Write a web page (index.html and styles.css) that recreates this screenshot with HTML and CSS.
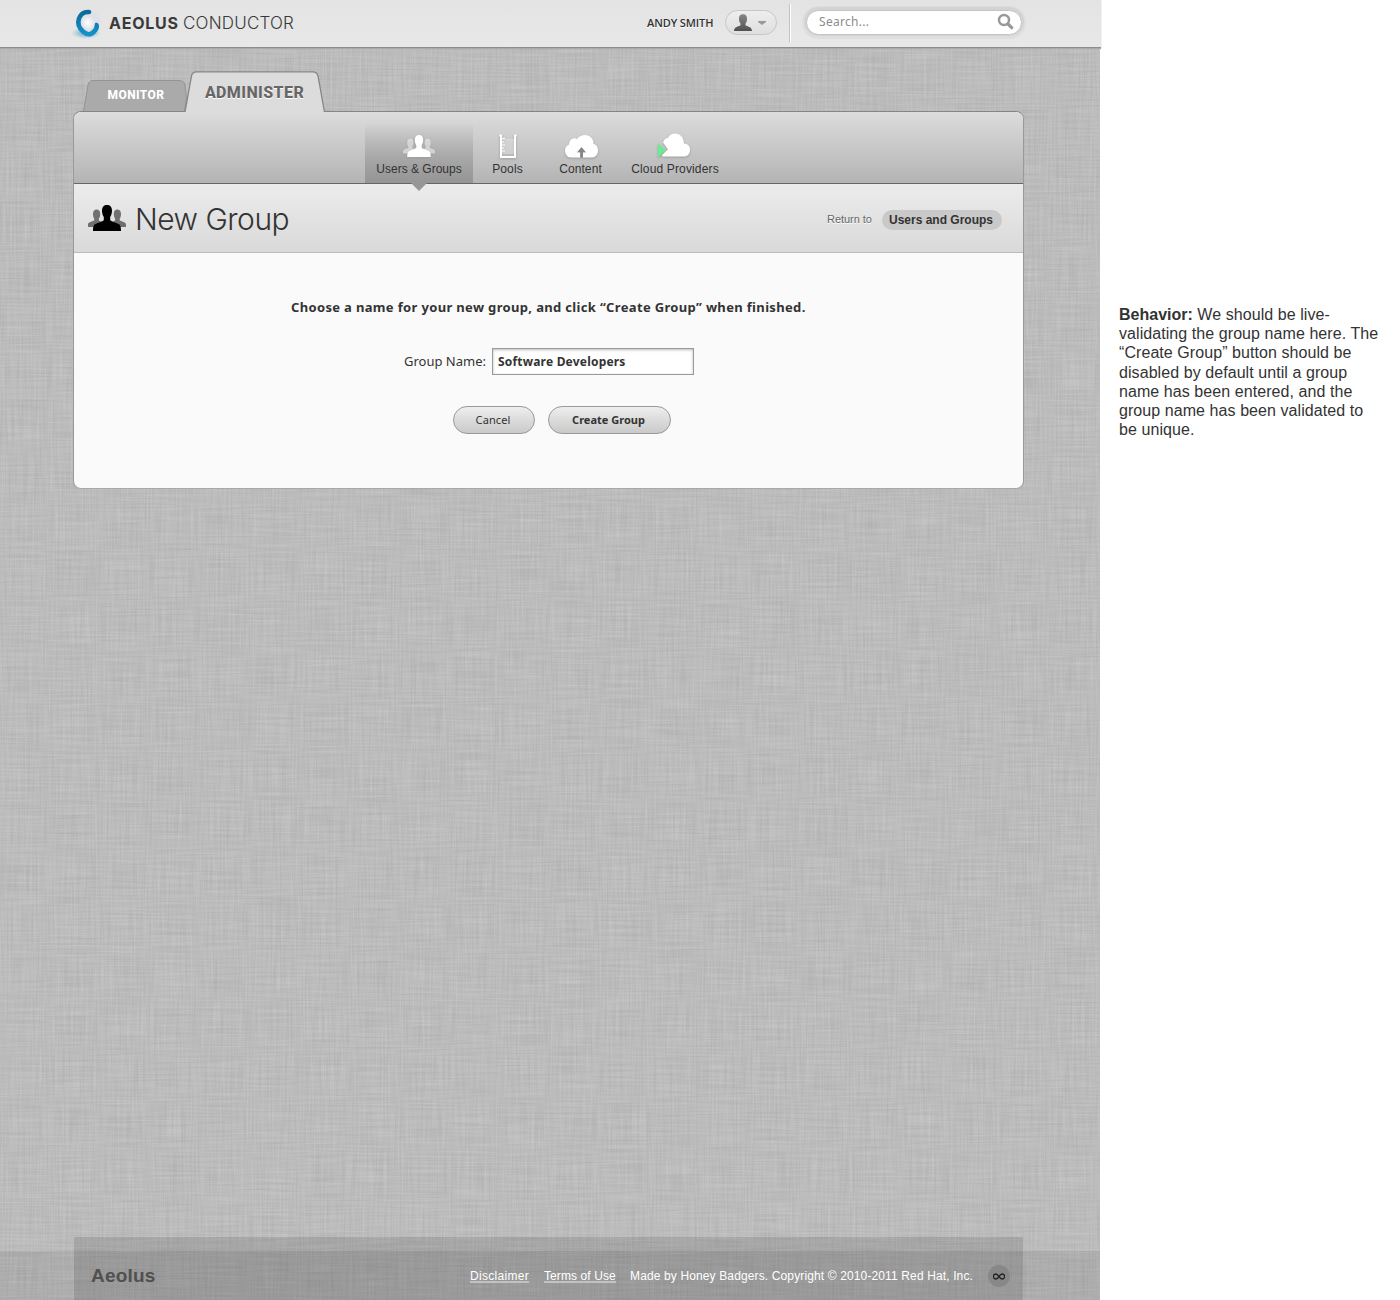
FILE: index.html
```html
<!DOCTYPE html>
<html lang="en">
<head>
<meta charset="utf-8">
<title>Aeolus Conductor – New Group</title>
<link rel="stylesheet" href="styles.css">
</head>
<body>
<svg class="defs" width="0" height="0" aria-hidden="true">
  <defs>
    <linearGradient id="ring" x1="0" y1="0" x2="0" y2="1"><stop offset="0" stop-color="#0b6b98"/><stop offset="1" stop-color="#1591c8"/></linearGradient>
    <radialGradient id="ball"><stop offset="0" stop-color="#fff"/><stop offset="1" stop-color="#e0e0ea"/></radialGradient>
    <radialGradient id="glow"><stop offset="0" stop-color="#5f9dbb"/><stop offset="1" stop-color="#6ab2d4" stop-opacity="0"/></radialGradient>
    <linearGradient id="person" x1="0" y1="0" x2="0" y2="1"><stop offset="0" stop-color="#888"/><stop offset="1" stop-color="#505050"/></linearGradient>
    <symbol id="users" viewBox="0 0 38 26">
      <g class="side"><path d="M5 9c0-3 1.300-4.500 3.700-4.500s3.500 1.500 3.500 4.500c0 2-.6 3.500-1.300 4.500v2l5 2.500v4H0v-2.500c0-2 2.500-2.500 6.200-4v-2C5.500 12.500 5 11 5 9z"/><path d="M33 9c0-3-1.300-4.500-3.700-4.500S25.800 6 25.800 9c0 2 .6 3.500 1.300 4.500v2l-5 2.500v4H38v-2.500c0-2-2.500-2.500-6.200-4v-2C32.500 12.500 33 11 33 9z"/></g>
      <path d="M14 5.500C14 2 15.800 0 19 0s5 2 5 5.500c0 3-.8 5-1.800 6.500v3.200c2 1.500 5.500 2.500 8.300 3.800 1.700.8 2.500 2.500 2.500 7H5c0-4.500.8-6.200 2.500-7 2.800-1.300 6.300-2.300 8.300-3.800V12c-1-1.500-1.800-3.500-1.800-6.500z"/>
    </symbol>
    <filter id="linen" x="0" y="0" width="100%" height="100%" color-interpolation-filters="sRGB">
      <feTurbulence type="fractalNoise" baseFrequency="0.55 0.02" numOctaves="2" seed="4"/>
      <feColorMatrix values=".15 0 0 0 .66 .15 0 0 0 .66 .15 0 0 0 .66 0 0 0 0 1" result="warp"/>
      <feTurbulence type="fractalNoise" baseFrequency="0.02 0.55" numOctaves="2" seed="9"/>
      <feColorMatrix values=".15 0 0 0 .66 .15 0 0 0 .66 .15 0 0 0 .66 0 0 0 0 1"/>
      <feComposite in2="warp" operator="arithmetic" k2=".5" k3=".5"/>
    </filter>
  </defs>
</svg>
<div class="layout">
  <div class="screen">
    <svg class="fabric" width="1100" height="1300" aria-hidden="true"><rect width="1100" height="1300" filter="url(#linen)"/></svg>
    <header class="topbar">
      <a class="logo">
        <svg width="32" height="36" viewBox="0 0 32 36"><ellipse cx="15" cy="29" rx="15" ry="6" fill="url(#glow)"/><circle cx="17.500" cy="18.300" r="11.800" fill="#e0e0ea"/><path d="M18 8Q10.500 7.500 8 14.500T12 27.500T24 26.500Q26.500 24 25.500 21" fill="none" stroke="url(#ring)" stroke-width="4.600" stroke-linecap="round"/><circle cx="17" cy="18.800" r="7" fill="url(#ball)"/></svg>
        <span class="brand"><b>AEOLUS</b><span class="thin">CONDUCTOR</span></span>
      </a>
      <span class="username">ANDY SMITH</span>
      <button class="account"><svg width="18" height="17" viewBox="0 0 18 17"><path d="M5 5C5 1.500 6.500.3 9 .3s4 1.200 4 4.700c0 2-.7 3.700-1.500 4.600v1.700c1.500 1.200 6.500 1.500 6.500 5.700H0c0-4.200 5-4.500 6.500-5.700V9.600C5.700 8.700 5 7 5 5z" fill="url(#person)"/></svg><svg width="8" height="4" viewBox="0 0 8 4"><path d="M0 0h8v1L4 4 0 1z" fill="#999"/></svg></button>
      <i class="rule"></i>
      <div class="search"><span>Search...</span><svg width="18" height="18" viewBox="0 0 18 18" fill="none" stroke="#999"><circle cx="7" cy="7" r="5" stroke-width="2.500"/><path d="M10.800 10.800L14.700 14.700" stroke-width="3.300" stroke-linecap="round"/></svg></div>
    </header>
    <nav class="tabs">
      <a class="tab"><svg width="104" height="31" viewBox="0 0 104 31"><path d="M.5 31L5 5Q6 .5 10 .5H96Q101 .5 102 5L103.500 18 101.500 31" fill="#aaa" stroke="#949494"/></svg><span>MONITOR</span></a>
      <a class="tab active"><svg width="142" height="42" viewBox="0 0 142 42"><path d="M1 41L7.500 5Q8.300 .8 12.500 .8H129Q133 .8 134 5L140.500 41V42H1z" fill="#dcdcdc"/><path d="M1 41L7.500 5Q8.300 .8 12.500 .8H129Q133 .8 134 5L140.500 41" fill="none" stroke="#858585" stroke-width="1.300"/></svg><span>ADMINISTER</span></a>
    </nav>
    <main class="panel">
      <nav class="sections">
        <a class="current"><svg class="white" width="32" height="22"><use href="#users"/></svg><span>Users &amp; Groups</span></a>
        <a class="pools"><svg width="20" height="26" viewBox="0 0 20 26"><path d="M4 6h12v15H4z" fill="#fff" opacity=".35"/><path d="M1.300 2.500H3V24h14V2.500h1.700" fill="none" stroke="#fff" stroke-width="2"/><path d="M3 5.500h4M3 9h3M3 12h4M3 15h3M3 18h4" stroke="#fff"/></svg><span>Pools</span></a>
        <a class="content"><svg width="36" height="26" viewBox="0 0 36 26"><path d="M7 24.500C3 24.500 1 21 1 17.500c0-3.500 2-5.500 4-6 0-5 4.500-7.500 8-5.500C15 3 18 2 21 2c5 0 9 4 8.500 9 3 .5 4.500 3.500 4.500 6.500 0 4-2.500 7-6 7H19v-5h3L17.500 14 13 19.500h3v5z" fill="#fff"/><path d="M17.500 14.500l4 4.500H19v5.500h-2.500V19H13.500z" fill="#858585"/></svg><span>Content</span></a>
        <a class="providers"><svg width="34" height="28" viewBox="0 0 34 28"><path d="M1 11.500l7.500 7L1 25.500z" fill="#64f08c"/><path d="M6 10.500c1-2.500 2.500-4.500 5-4.500 1-3 4-4.500 7-4.500 5 0 9 4 9 10 4 0 6 3 6 6.500 0 4-2.500 6.500-6 6.500H8c-2 0-3.500-.5-3-1.500L11 17.500z" fill="#fff"/></svg><span>Cloud Providers</span></a>
      </nav>
      <section class="heading">
        <svg width="38" height="26"><use href="#users"/></svg>
        <h1>New Group</h1>
        <span class="return">Return to</span><a class="back">Users and Groups</a>
      </section>
      <form class="form">
        <p>Choose a name for your new group, and click “Create Group” when finished.</p>
        <div class="field"><label>Group Name:</label><div class="input">Software Developers</div></div>
        <div class="actions"><button type="button" class="cancel">Cancel</button><button type="button" class="create">Create Group</button></div>
      </form>
    </main>
    <footer class="footer">
      <div class="foot">
        <b>Aeolus</b><a class="disclaimer">Disclaimer</a><a class="terms">Terms of Use</a><span class="made">Made by Honey Badgers. Copyright © 2010-2011 Red Hat, Inc.</span>
        <i class="infinity"><svg width="12" height="7" viewBox="0 0 12 7"><path d="M6 3.500C4.500 1.400 3.800 1 2.900 1a2.500 2.500 0 0 0 0 5C3.800 6 4.500 5.600 6 3.500S8.200 1 9.100 1a2.500 2.500 0 0 1 0 5C8.200 6 7.500 5.600 6 3.500z" fill="none" stroke="#222" stroke-width="1.300"/></svg></i>
      </div>
    </footer>
  </div>
  <aside class="note"><b>Behavior:</b> We should be live-<br>validating the group name here. The<br>“Create Group” button should be<br>disabled by default until a group<br>name has been entered, and the<br>group name has been validated to<br>be unique.</aside>
</div>
</body>
</html>
```
FILE: styles.css
```css
* { box-sizing: border-box; }
body { margin: 0; background: #fff; color: #333; font: 12px/16px "Liberation Sans", Arial, sans-serif; }
svg { display: block; flex: none; }
button { font: inherit; color: inherit; margin: 0; padding: 0; }
span, b, a, p, label, h1 { white-space: nowrap; }
.defs { position: absolute; }
.layout { display: flex; width: 1400px; height: 1300px; overflow: hidden; }
.screen { position: relative; display: flex; flex-direction: column; width: 1100px; height: 1300px; flex: none; background: #bbb; isolation: isolate; }
.fabric { position: absolute; inset: 0; z-index: -1; }

.topbar { display: flex; align-items: flex-start; width: 1101px; height: 48px; flex: none; background: linear-gradient(#e3e3e3, #e8e8e8); border-bottom: 1px solid #8d8d8d; box-shadow: 0 1px 1px #aaa; padding-left: 71px; }
.logo { display: flex; width: 576px; padding-top: 4px; }
.brand { display: flex; padding: 9px 0 0 6px; font: 17px/20px "Inter", sans-serif; color: #3a3a3a; }
.brand b { width: 74px; font-weight: 700; font-size: 16px; letter-spacing: .75px; }
.brand .thin { font-weight: 300; letter-spacing: .2px; }
.username { width: 78px; padding-top: 15px; font: 600 11px/16px "Open Sans", sans-serif; letter-spacing: -.1px; text-shadow: 0 1px #fff; }
.account { display: flex; align-items: center; gap: 6px; width: 52px; height: 25px; margin-top: 10px; padding-left: 8px; border: 1px solid #c6c6c6; border-radius: 13px; background: linear-gradient(#eee, #dfdfdf); }
.rule { width: 2px; height: 38px; margin: 4px 0 0 12px; background: #c2c2c2; border-right: 1px solid #fff; }
.search { display: flex; justify-content: space-between; align-items: flex-start; width: 216px; height: 25px; margin: 10px 0 0 15px; padding: 2px 6px 0 12px; border: 1px solid #c4c4c4; border-radius: 13px; background: #fff; box-shadow: 0 -1px 0 2px #d3d3d3, 0 0 0 4px #dedede; color: #8c8c8c; font: 12px/18px "Noto Sans", sans-serif; letter-spacing: .3px; }

.tabs { display: flex; align-items: flex-end; height: 64px; padding-left: 83px; margin-bottom: -1px; flex: none; z-index: 1; }
.tab { display: flex; justify-content: center; position: relative; width: 104px; height: 31px; margin-bottom: 1px; color: #fff; font: 800 12px/30px "Roboto", sans-serif; letter-spacing: .4px; }
.tab svg { position: absolute; left: 0; top: 0; z-index: -1; }
.tab span { padding-left: 2px; }
.tab.active { width: 142px; height: 42px; margin: 0 0 -1px -3px; color: #666; font-size: 16px; line-height: 43px; text-shadow: 0 1px #fff; }
.tab.active span { padding: 0 1px 0 0; }

.panel { display: flex; flex-direction: column; width: 951px; height: 378px; margin-left: 73px; flex: none; border: 1px solid #858585; border-color: #858585 #999 #a8a8a8; border-radius: 8px; background: #fafafa; }
.sections { display: flex; height: 72px; flex: none; padding-left: 291px; border-bottom: 1px solid #666; border-radius: 7px 7px 0 0; background: linear-gradient(#dcdcdc, #b4b4b4); }
.sections a { position: relative; display: flex; flex-direction: column; align-items: center; justify-content: flex-end; padding-bottom: 6px; gap: 2px; letter-spacing: .1px; }
.sections svg { filter: drop-shadow(0 1px 1px #9a9a9a); }
.current { width: 108px; background: linear-gradient(#9990 15%, #969696); }
.current::after { content: ""; position: absolute; left: 46px; top: 71px; border: 8px solid transparent; border-top-color: #969696; border-bottom: 0; }
.sections .current { gap: 4px; letter-spacing: 0; }
.white { fill: #fff; }
.side { opacity: .5; }
.pools { width: 69px; }
.content { width: 77px; }
.content svg { margin-left: 2px; }
.providers { width: 112px; }
.providers svg { margin-left: -3px; }
.sections .providers { gap: 1px; letter-spacing: .15px; }
.heading { display: flex; align-items: center; height: 69px; flex: none; padding-left: 14px; border-bottom: 1px solid #bbb; background: linear-gradient(#ececec, #d9d9d9); }
.heading h1 { width: 692px; margin: 1px 0 0 9px; font: 300 30px/36px "Inter", sans-serif; letter-spacing: -.5px; }
.return { width: 55px; margin-top: 2px; color: #666; font-size: 11px; letter-spacing: -.05px; text-shadow: 0 1px #fff; }
.back { width: 120px; height: 20px; margin-top: 4px; padding-right: 2px; border-radius: 10px; background: #c9c9c9; text-align: center; font-weight: 700; line-height: 21px; }
.form { display: flex; flex-direction: column; font: 13px/18px "Noto Sans", sans-serif; }
.form p { margin: 45px 0 0 217px; font-weight: 700; letter-spacing: .34px; }
.field { display: flex; align-items: center; margin: 32px 0 0 330px; }
.field label { width: 88px; margin-top: -2px; letter-spacing: 0; }
.input { width: 202px; height: 27px; padding-left: 5px; border: 1px solid #999; background: #fff; box-shadow: inset 0 1px 3px #bbb; font-weight: 700; font-size: 12px; line-height: 26px; letter-spacing: .2px; }
.actions { display: flex; gap: 13px; margin: 31px 0 0 379px; }
.actions button { width: 82px; height: 28px; padding-right: 2px; border: 1px solid #999; border-radius: 14px; background: linear-gradient(#eee, #c9c9c9); font-size: 11px; letter-spacing: .1px; }
.actions .create { width: 123px; font-weight: 700; letter-spacing: 0; }

.footer { display: flex; align-items: flex-end; height: 63px; margin-top: auto; flex: none; background: linear-gradient(transparent 14px, #00000014 14px); }
.foot { display: flex; width: 949px; height: 63px; margin-left: 74px; padding: 31px 0 0 17px; background: #0000001c; color: #fff; }
.foot b { width: 379px; font-size: 19px; line-height: 15px; letter-spacing: .2px; color: #505050; }
.foot a { height: 15px; border-bottom: 2px solid #c2c2c2; }
.disclaimer { width: 59px; letter-spacing: .3px; }
.terms { width: 72px; margin-left: 15px; letter-spacing: .1px; }
.made { width: 344px; margin-left: 14px; letter-spacing: .13px; }
.infinity { display: flex; align-items: center; justify-content: center; width: 22px; height: 22px; margin: -3px 0 0 14px; border-radius: 11px; background: #888; }
.note { margin: 305px 0 0 19px; font-size: 16px; line-height: 19.200px; letter-spacing: .07px; color: #333; white-space: nowrap; }
.note b { letter-spacing: 0; }
```
